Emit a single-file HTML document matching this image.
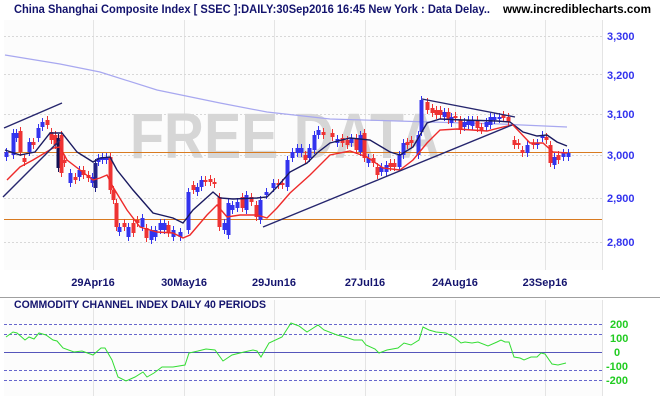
<!DOCTYPE html>
<html><head><meta charset="utf-8"><style>
html,body{margin:0;padding:0;background:#fff;width:660px;height:400px;overflow:hidden}
svg{display:block}
text{font-family:"Liberation Sans",Arial,sans-serif;font-weight:bold}
</style></head><body>
<svg id="s" width="660" height="400" viewBox="0 0 660 400" xmlns="http://www.w3.org/2000/svg">
<rect x="0" y="0" width="660" height="400" fill="#fff"/>
<rect x="4" y="20" width="598" height="250" fill="#fcfcfc"/>
<rect x="4" y="300" width="598" height="96" fill="#fcfcfc"/>
<g id="grid" stroke="#e4e4e4" stroke-width="1"></g>
<g stroke="#d8d8d8" stroke-dasharray="2,2" stroke-width="1">
<line x1="4" y1="36.5" x2="602" y2="36.5"/><line x1="4" y1="74.5" x2="602" y2="74.5"/>
<line x1="4" y1="114.5" x2="602" y2="114.5"/><line x1="4" y1="155.5" x2="602" y2="155.5"/>
<line x1="4" y1="198.5" x2="602" y2="198.5"/><line x1="4" y1="242.5" x2="602" y2="242.5"/>
</g>
<text x="130" y="158" font-size="64" fill="#d6d6d6" textLength="310" lengthAdjust="spacingAndGlyphs">FREE DATA</text>
<line x1="4" y1="152.5" x2="602" y2="152.5" stroke="#d87a20"/>
<line x1="4" y1="219.5" x2="602" y2="219.5" stroke="#d87a20"/>
<polyline fill="none" stroke="#a8a8f0" stroke-width="1.2" points="5,55 60,64 100,72 157,90 220,103 267,112 330,119 430,122 500,124 567,127"/>
<g id="cand"></g>
<polyline fill="none" stroke="#1a1a60" stroke-width="1.4" points="5,150 20,155 35,152 50,133 62,133 77,152 93,162 100,158 110,157 117,170 133,190 153,213 173,218 183,223 193,210 213,192 220,198 233,199 257,198 267,197 277,187 290,172 307,163 317,153 330,143 350,138 370,140 390,152 400,155 413,147 427,123 440,119 463,120 497,121 510,122 523,132 537,136 547,135 557,142 567,146"/>
<polyline fill="none" stroke="#ee2a2a" stroke-width="1.4" points="7,180 20,167 33,160 53,148 60,147 67,160 80,170 93,180 100,178 107,175 113,187 127,210 140,227 157,232 173,233 183,238 190,235 207,215 217,205 227,217 240,215 257,215 267,218 277,208 290,193 310,175 330,155 350,151 367,157 383,168 400,170 413,160 427,143 440,130 457,129 487,131 503,127 513,125 530,143 543,143 553,152 567,153"/>
<g stroke="#26266e" stroke-width="1.4">
<line x1="4" y1="128" x2="62" y2="103"/>
<line x1="3" y1="197" x2="60" y2="140"/>
<line x1="263" y1="227" x2="512" y2="125"/>
<line x1="422" y1="99" x2="515" y2="117"/>
</g>
<text font-size="11" fill="#3333ee">
<tspan x="607" y="40">3,300</tspan><tspan x="607" y="79">3,200</tspan><tspan x="607" y="118">3,100</tspan><tspan x="607" y="159">3,000</tspan><tspan x="607" y="202">2,900</tspan><tspan x="607" y="246">2,800</tspan>
</text>
<g font-size="11" fill="#14146e">
<text x="93" y="286" text-anchor="middle">29Apr16</text>
<text x="184" y="286" text-anchor="middle">30May16</text>
<text x="274" y="286" text-anchor="middle">29Jun16</text>
<text x="365" y="286" text-anchor="middle">27Jul16</text>
<text x="455" y="286" text-anchor="middle">24Aug16</text>
<text x="545" y="286" text-anchor="middle">23Sep16</text>
</g>
<line x1="0" y1="297.5" x2="660" y2="297.5" stroke="#a0a0a0"/>
<text x="14" y="13" font-size="12" fill="#14146e" textLength="476" lengthAdjust="spacingAndGlyphs">China Shanghai Composite Index [ SSEC ]:DAILY:30Sep2016 16:45 New York : Data Delay..</text>
<text x="503" y="13" font-size="12" fill="#000" textLength="148" lengthAdjust="spacingAndGlyphs">www.incrediblecharts.com</text>
<text x="14" y="308" font-size="11" fill="#14146e" textLength="252" lengthAdjust="spacingAndGlyphs">COMMODITY CHANNEL INDEX DAILY 40 PERIODS</text>
<g stroke="#6666cc" stroke-dasharray="3,2">
<line x1="4" y1="324.5" x2="602" y2="324.5"/><line x1="4" y1="334.5" x2="602" y2="334.5"/>
<line x1="4" y1="370.5" x2="602" y2="370.5"/><line x1="4" y1="380.5" x2="602" y2="380.5"/>
</g>
<line x1="4" y1="352.5" x2="602" y2="352.5" stroke="#5555bb"/>
<polyline fill="none" stroke="#33dd33" stroke-width="1" points="6,337 13,332 17,333 25,340 29,337 34,339 39,333 46,335 53,340 57,341 63,348 74,352 82,351 93,355 101,348 105,348 112,360 118,377 126,381 135,377 143,372 147,377 154,373 162,367 173,367 185,365 189,353 198,351 206,349 215,350 223,361 232,355 244,352 253,350 257,351 261,357 269,343 282,337 291,323 299,326 307,332 318,325 324,330 337,335 345,337 354,340 362,340 366,345 375,349 379,353 387,350 398,348 404,343 411,345 419,340 423,327 429,330 436,332 446,333 455,338 461,343 465,342 472,343 478,342 488,346 497,342 501,340 505,342 509,342 514,357 520,358 524,360 531,357 537,357 541,353 545,354 552,364 558,365 566,363"/>
<g font-size="11" fill="#22cc22">
<text x="610" y="328">200</text><text x="610" y="342">100</text><text x="614" y="356">0</text><text x="606" y="370">-100</text><text x="606" y="384">-200</text>
</g>
</svg>
<script>
var ns="http://www.w3.org/2000/svg";
var g=document.getElementById('grid');
[93,184,274,365,455,545,602].forEach(function(x){
 [[20,270],[300,396]].forEach(function(r){var l=document.createElementNS(ns,'line');l.setAttribute('x1',x+.5);l.setAttribute('x2',x+.5);l.setAttribute('y1',r[0]);l.setAttribute('y2',r[1]);g.appendChild(l);});
});
var B='#3333ee',R='#ee3333';
var d=[[6,152,157,B],[13,133,155,B],[16,133,138,B],[20,131,152,R],[24,158,162,R],[29,142,152,B],[33,142,145,R],[38,128,138,B],[42,122,127,B],[47,120,125,R],[51,132,140,R],[55,135,145,R],[58,138,168,'#111155'],[61,135,173,R],[64,160,163,R],[70,173,183,B],[75,177,180,R],[79,170,177,B],[83,170,175,R],[88,175,178,R],[92,177,183,B],[95,163,188,'#222288'],[98,158,162,B],[102,157,160,B],[106,157,160,B],[110,157,190,R],[113,190,200,R],[116,203,227,R],[119,227,232,B],[124,223,227,R],[128,227,237,B],[133,223,233,R],[137,220,223,R],[142,218,227,B],[146,228,238,R],[151,230,240,B],[155,230,237,B],[160,223,230,B],[164,223,230,B],[168,225,233,R],[173,230,237,B],[180,232,237,B],[188,192,230,B],[193,185,190,R],[197,187,192,B],[201,180,187,B],[205,180,182,R],[210,179,182,R],[214,182,184,R],[219,197,227,R],[224,223,230,B],[228,203,235,B],[232,205,210,B],[237,202,208,B],[242,197,208,R],[246,195,210,B],[251,197,202,R],[256,205,217,R],[260,200,220,B],[266,192,195,B],[273,183,188,B],[278,183,185,R],[282,183,185,R],[287,160,187,B],[292,152,158,B],[297,148,153,B],[301,148,153,B],[305,155,160,R],[309,148,158,B],[314,135,150,B],[318,130,135,B],[323,132,135,R],[332,133,137,R],[337,139,143,B],[342,138,143,R],[347,140,145,R],[351,138,143,B],[356,138,150,R],[360,135,152,B],[364,133,158,R],[368,158,163,B],[373,158,163,R],[377,167,175,R],[381,167,172,B],[386,165,172,B],[390,163,167,R],[394,163,167,R],[399,155,167,B],[403,143,155,B],[407,142,145,R],[411,140,143,R],[418,135,155,B],[421,100,132,B],[427,102,110,R],[432,108,113,R],[436,110,115,R],[440,110,115,R],[444,112,117,B],[448,112,120,R],[451,117,123,B],[455,116,118,R],[460,120,130,R],[464,122,127,B],[468,120,125,B],[472,120,126,B],[477,120,128,R],[481,127,130,R],[486,122,127,B],[490,117,125,B],[494,117,120,B],[499,117,119,B],[503,115,118,R],[508,117,122,R],[514,140,145,R],[518,143,145,R],[522,150,153,R],[527,145,153,B],[533,143,145,R],[537,143,145,B],[542,135,138,B],[546,137,140,R],[550,145,163,R],[554,157,165,B],[558,155,160,R],[563,153,157,B],[568,153,157,B]];
var c=document.getElementById('cand');
d.forEach(function(a){
 var w=document.createElementNS(ns,'line');w.setAttribute('x1',a[0]+.5);w.setAttribute('x2',a[0]+.5);w.setAttribute('y1',a[1]-4);w.setAttribute('y2',a[2]+4);w.setAttribute('stroke',a[3]);c.appendChild(w);
 var r=document.createElementNS(ns,'rect');r.setAttribute('x',a[0]-1.5);r.setAttribute('y',a[1]);r.setAttribute('width',4);r.setAttribute('height',Math.max(2,a[2]-a[1]));r.setAttribute('fill',a[3]);c.appendChild(r);
});
</script>
</body></html>
